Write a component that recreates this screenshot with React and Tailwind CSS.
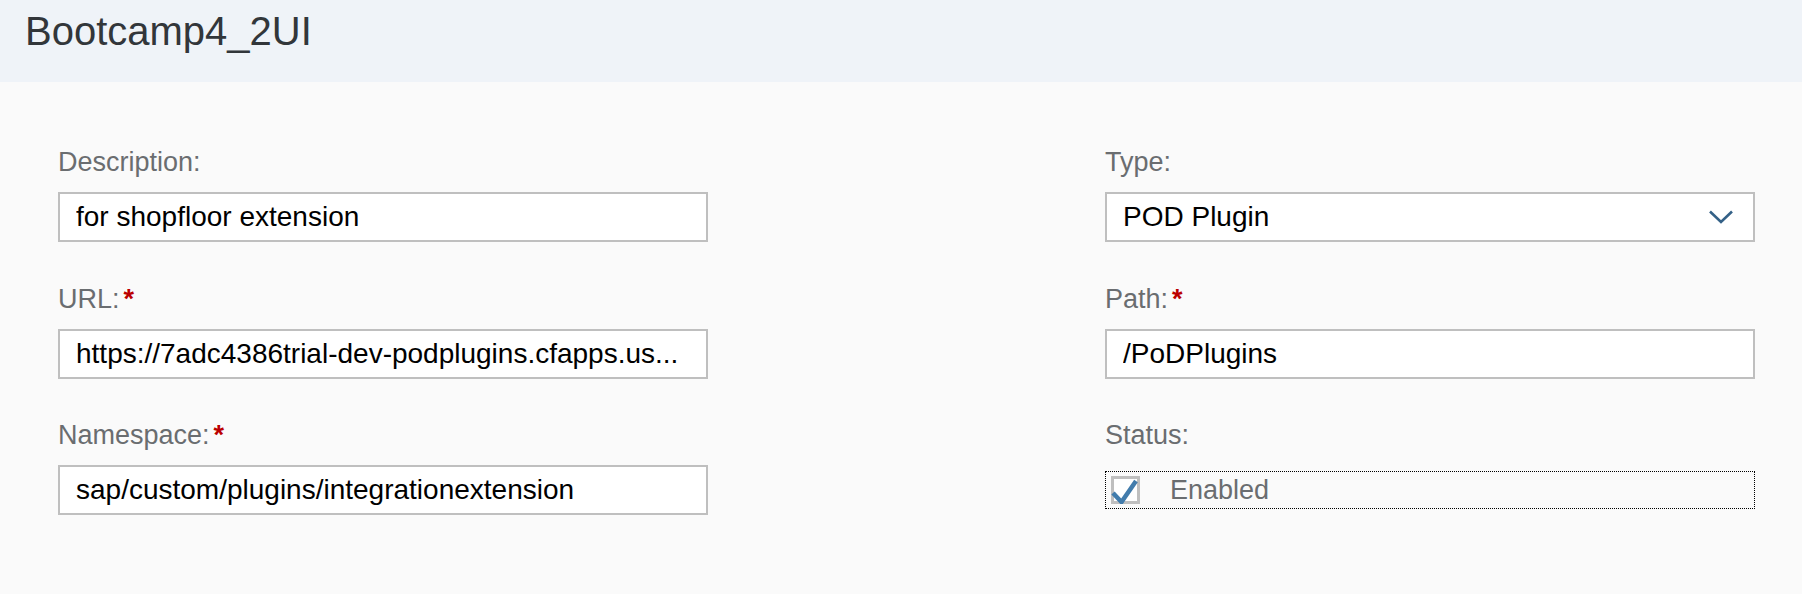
const LEFT_FIELDS = [
  { label: 'Description:', value: 'for shopfloor extension' },
  { label: 'URL:', value: 'https://7adc4386trial-dev-podplugins.cfapps.us...', required: true },
  { label: 'Namespace:', value: 'sap/custom/plugins/integrationextension', required: true },
];

function Label({ text, required }) {
  return (
    <div className="h-[32px] text-[27px] leading-[32px] text-[#6a6d70] whitespace-nowrap">
      {text}
      {required && <span className="ml-[4px] font-bold text-[#bb0000]">*</span>}
    </div>
  );
}

function TextInput({ value }) {
  return (
    <div className="mt-[14px] h-[50px] border-2 border-[#bfbfbf] bg-white px-4 flex items-center">
      <span className="text-[28px] text-black whitespace-nowrap overflow-hidden text-ellipsis">{value}</span>
    </div>
  );
}

function Field({ label, value, required }) {
  return (
    <div>
      <Label text={label} required={required} />
      <TextInput value={value} />
    </div>
  );
}

export default function App() {
  return (
    <div className="min-h-screen bg-[#fafafa]" style={{ fontFamily: '"Liberation Sans", Arial, sans-serif' }}>
      {/* Header */}
      <div className="h-[82px] bg-[#eff3f8] pl-[25px] pt-[9px]">
        <h1 className="text-[40px] leading-[44px] text-[#32363a]">Bootcamp4_2UI</h1>
      </div>

      {/* Form */}
      <div className="grid grid-cols-[650px_650px] gap-x-[397px] pl-[58px] pt-[64px]">
        <div className="flex flex-col gap-[40.5px]">
          {LEFT_FIELDS.map((f) => (
            <Field key={f.label} {...f} />
          ))}
        </div>

        <div className="flex flex-col gap-[40.5px]">
          <div>
            <Label text="Type:" />
            <div className="mt-[14px] h-[50px] border-2 border-[#bfbfbf] bg-white pl-4 pr-[20px] flex items-center justify-between">
              <span className="text-[28px] text-black">POD Plugin</span>
              <svg width="24" height="14" viewBox="0 0 24 14" fill="none">
                <polyline points="1,1.5 12,12 23,1.5" stroke="#346187" strokeWidth="2.6" />
              </svg>
            </div>
          </div>

          <Field label="Path:" value="/PoDPlugins" required />

          <div>
            <Label text="Status:" />
            <div className="mt-[14px] h-[50px] flex items-center">
              <div className="w-full h-[38px] border border-dotted border-black flex items-center pl-[5px]">
                <div className="relative w-[29px] h-[28px] border-[3px] border-[#bfbfbf] bg-white">
                  <svg className="absolute left-[-3px] top-[-3px]" width="29" height="28" viewBox="0 0 29 28" fill="none">
                    <polyline points="2,17 10.5,26 25,5" stroke="#427cac" strokeWidth="4.5" />
                  </svg>
                </div>
                <span className="ml-[30px] text-[27px] text-[#6a6d70]">Enabled</span>
              </div>
            </div>
          </div>
        </div>
      </div>
    </div>
  );
}
